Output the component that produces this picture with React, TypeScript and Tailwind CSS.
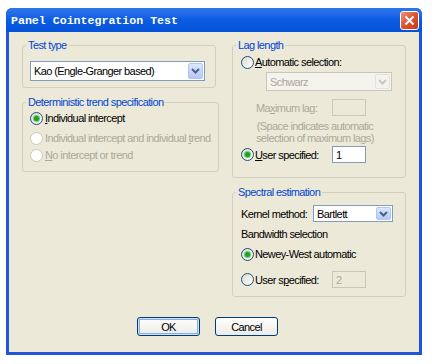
import React from "react";

const txt =
  "font-['Liberation_Sans',Arial,sans-serif] text-[11px] tracking-[-0.6px] leading-[14px]";

function Chevron({ disabled }: { disabled?: boolean }) {
  return (
    <svg width="9" height="6" viewBox="0 0 9 6">
      <path
        d="M1 1 L4.5 4.5 L8 1"
        fill="none"
        stroke={disabled ? "#c9c7ba" : "#4d6185"}
        strokeWidth="2"
      />
    </svg>
  );
}

function Combo({
  text,
  className,
  disabled,
}: {
  text: string;
  className: string;
  disabled?: boolean;
}) {
  return (
    <div
      className={`flex items-stretch border p-[1px] ${
        disabled ? "border-[#c9c7ba] bg-[#f4f3ee]" : "border-[#7f9db9] bg-white"
      } ${className}`}
    >
      <div
        className={`flex-1 flex items-center pl-[2px] ${
          disabled ? "text-[#aca899]" : "text-black"
        }`}
      >
        {text}
      </div>
      <div
        className={`w-[15px] flex items-center justify-center rounded-[2px] border ${
          disabled
            ? "border-[#e5e3d9] bg-[#f4f3ee]"
            : "border-[#b1c6f7] bg-linear-to-b from-[#dce7fd] to-[#b4c9f7]"
        }`}
      >
        <Chevron disabled={disabled} />
      </div>
    </div>
  );
}

function Radio({ checked, disabled }: { checked?: boolean; disabled?: boolean }) {
  return (
    <span
      className={`flex items-center justify-center w-[13px] h-[13px] rounded-full border shrink-0 ${
        disabled
          ? "border-[#cac8bb] bg-white"
          : "border-[#1c5180] bg-linear-to-br from-[#dcd9cd] to-white"
      }`}
    >
      {checked && (
        <span className="w-[5px] h-[5px] rounded-full bg-[#21a121] shadow-[0_0_0_1px_#6ccf6c]" />
      )}
    </span>
  );
}

function TextBox({ value, disabled }: { value: string; disabled?: boolean }) {
  return (
    <div
      className={`w-[34px] h-[17px] border flex items-center pl-[3px] ${
        disabled
          ? "border-[#c9c7ba] bg-[#ece9d8] text-[#aca899]"
          : "border-[#7f9db9] bg-white text-black"
      }`}
    >
      {value}
    </div>
  );
}

export default function App() {
  return (
    <div className={`w-[432px] h-[364px] bg-white pt-[8px] pl-[6px] ${txt}`}>
      <div className="w-[416px] h-[347px] flex flex-col rounded-t-[6px] overflow-hidden bg-[#1f56d8]">
        {/* Title bar */}
        <div className="h-[24px] flex items-center pl-[5px] pr-[3px] bg-linear-to-b from-[#2f76ec] via-[#0a5ce2] to-[#0552d8]">
          <span className="flex-1 text-white font-['Liberation_Mono',monospace] font-bold text-[11.6px] tracking-[0px] leading-[14px] pt-[1px]">
            Panel Cointegration Test
          </span>
          <div className="w-[19px] h-[19px] rounded-[3px] border border-white bg-linear-to-br from-[#e8917a] via-[#d8552f] to-[#c23a1a] flex items-center justify-center">
            <svg width="11" height="11" viewBox="0 0 11 11">
              <path d="M1.5 1.5 L9.5 9.5 M9.5 1.5 L1.5 9.5" stroke="white" strokeWidth="2" />
            </svg>
          </div>
        </div>
        {/* Body */}
        <div className="flex-1 mx-[3px] mb-[3px] bg-[#ece9d8] px-[13px] pt-[6px] flex flex-col">
          <div className="flex items-start gap-[16px]">
            {/* Left column */}
            <div className="w-[194px] flex flex-col">
              <fieldset className="border border-[#d0d0bf] rounded-[3px] px-[7px] pb-[6px]">
                <legend className="ml-[-4px] px-[2px] text-[#0046d5]">Test type</legend>
                <Combo text="Kao (Engle-Granger based)" className="mt-[9px] w-[175px] h-[20px]" />
              </fieldset>
              <fieldset className="mt-[7px] border border-[#d0d0bf] rounded-[3px] px-[7px] pb-[8px]">
                <legend className="ml-[-4px] px-[2px] text-[#0046d5]">
                  Deterministic trend specification
                </legend>
                <div className="mt-[1px] h-[16px] flex items-center gap-[2px]">
                  <Radio checked />
                  <span>
                    <span className="underline">I</span>ndividual intercept
                  </span>
                </div>
                <div className="mt-[4px] h-[16px] flex items-center gap-[2px] text-[#aca899]">
                  <Radio disabled />
                  <span className="whitespace-nowrap">
                    Individual intercept and individual <span className="underline">t</span>rend
                  </span>
                </div>
                <div className="mt-[1px] h-[16px] flex items-center gap-[2px] text-[#aca899]">
                  <Radio disabled />
                  <span>
                    <span className="underline">N</span>o intercept or trend
                  </span>
                </div>
              </fieldset>
            </div>
            {/* Right column */}
            <div className="w-[174px] flex flex-col">
              <fieldset className="border border-[#d0d0bf] rounded-[3px] px-[8px] pb-[14px]">
                <legend className="ml-[-5px] px-[2px] text-[#0046d5]">Lag length</legend>
                <div className="mt-[2px] h-[16px] flex items-center gap-[1px]">
                  <Radio />
                  <span>
                    <span className="underline">A</span>utomatic selection:
                  </span>
                </div>
                <Combo text="Schwarz" disabled className="ml-[25px] mt-[2px] w-[126px] h-[19px]" />
                <div className="mt-[8px] h-[17px] flex items-center text-[#aca899]">
                  <span className="ml-[15px] w-[76px]">
                    Ma<span className="underline">x</span>imum lag:
                  </span>
                  <TextBox value="" disabled />
                </div>
                <div className="mt-[4px] w-[148px] flex flex-col items-center leading-[12px] text-[#aca899] whitespace-nowrap">
                  <span>(Space indicates automatic</span>
                  <span>selection of maximum lags)</span>
                </div>
                <div className="mt-[2px] h-[17px] flex items-center">
                  <Radio checked />
                  <span className="ml-[1px] w-[77px]">
                    <span className="underline">U</span>ser specified:
                  </span>
                  <TextBox value="1" />
                </div>
              </fieldset>
              <fieldset className="mt-[7px] border border-[#d0d0bf] rounded-[3px] px-[8px] pb-[8px]">
                <legend className="ml-[-5px] px-[2px] text-[#0046d5]">Spectral estimation</legend>
                <div className="mt-[6px] h-[17px] flex items-center">
                  <span className="w-[72px]">Kernel method:</span>
                  <Combo text="Bartlett" className="w-[80px] h-[17px]" />
                </div>
                <div className="mt-[5px] h-[14px] flex items-center">Bandwidth selection</div>
                <div className="mt-[5px] h-[16px] flex items-center gap-[1px]">
                  <Radio checked />
                  <span>Newey-West automatic</span>
                </div>
                <div className="mt-[9px] h-[17px] flex items-center">
                  <Radio />
                  <span className="ml-[1px] w-[77px]">
                    User s<span className="underline">p</span>ecified:
                  </span>
                  <TextBox value="2" disabled />
                </div>
              </fieldset>
            </div>
          </div>
          {/* Buttons */}
          <div className="mt-[20px] flex gap-[15px] pl-[115px]">
            <div className="w-[63px] h-[19px] rounded-[3px] border border-[#003c74] bg-linear-to-b from-white to-[#ecebe6] shadow-[inset_0_0_0_1px_#cee0fb,inset_0_0_0_2px_#89ade4] flex items-center justify-center">
              OK
            </div>
            <div className="w-[63px] h-[19px] rounded-[3px] border border-[#003c74] bg-linear-to-b from-white to-[#ecebe6] flex items-center justify-center">
              Cancel
            </div>
          </div>
        </div>
      </div>
    </div>
  );
}
